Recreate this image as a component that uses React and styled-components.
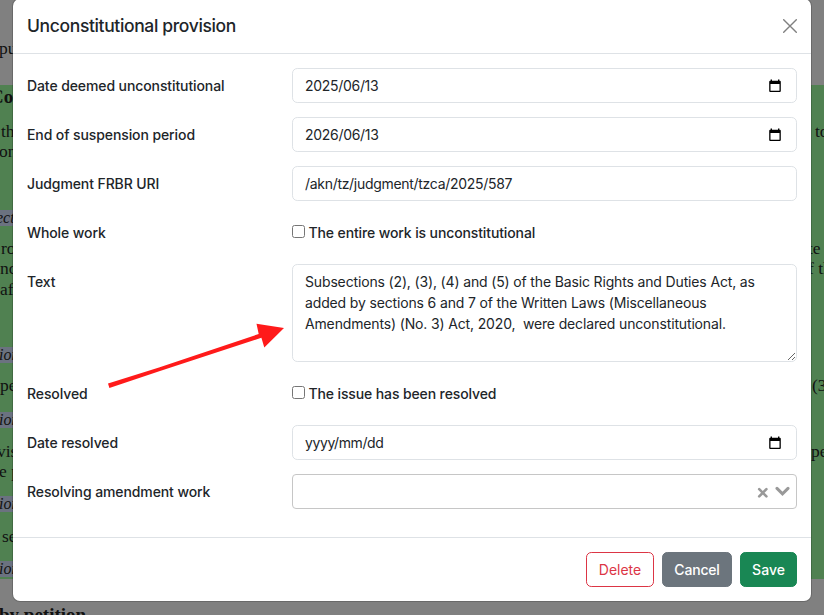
import React from "react";
import styled, { createGlobalStyle, css } from "styled-components";

const GlobalStyle = createGlobalStyle`
  * { box-sizing: border-box; }
  body {
    margin: 0;
    overflow: hidden;
    font: 400 14px/21px Inter, "Liberation Sans", sans-serif;
    color: #212529;
  }
`;

const Screen = styled.div`
  position: relative;
  width: 824px;
  height: 615px;
  overflow: hidden;
  background: linear-gradient(#808080 85px, #508151 85px 579px, #808080 579px);
`;

const Page = styled.div`
  display: flex;
  justify-content: space-between;
  font: 17.5px/19px "Palatino Linotype", "Liberation Serif", serif;
  color: #111;
`;

const Margin = styled.div`
  width: ${(p) => p.$width}px;
  white-space: nowrap;
`;

const PageLine = styled.div`
  height: 20px;
  margin-top: ${(p) => p.$gap || 0}px;
  text-indent: ${(p) => p.$indent || 0}px;
  ${(p) => p.$heading && css`
    font-weight: 700;
    font-size: 19px;
    line-height: 21px;
  `}
`;

const Reference = styled(PageLine)`
  height: 16px;
  line-height: 15px;
  font-size: 16px;
  font-style: italic;
  width: 14px;
  background: #6b7280;
`;

const Modal = styled.section`
  position: absolute;
  left: 13px;
  top: -1px;
  width: 798px;
  height: 602px;
  background: #fff;
  border-radius: 7px;
  box-shadow: 0 0 0 1px rgba(0, 0, 0, 0.175);
`;

const Header = styled.header`
  display: flex;
  align-items: center;
  justify-content: space-between;
  height: 55px;
  padding: 0 14px;
  border-bottom: 1px solid #dee2e6;
`;

const Title = styled.h5`
  margin: 0;
  font-size: 17.5px;
  font-weight: 500;
  line-height: 26px;
  letter-spacing: -0.36px;
`;

const CloseButton = styled.button`
  display: flex;
  padding: 0;
  border: 0;
  background: none;
  color: #808080;
`;

const Body = styled.div`
  display: flex;
  flex-direction: column;
  gap: 14px;
  height: 483px;
  padding: 14px;
`;

const Row = styled.div`
  display: grid;
  grid-template-columns: 265px 1fr;
  align-items: start;
`;

const Label = styled.label`
  padding: 7px 0;
  font-weight: 500;
  letter-spacing: -0.1px;
`;

const control = css`
  width: 100%;
  border: 1px solid #dee2e6;
  border-radius: 5.25px;
  background: #fff;
`;

const InputFrame = styled.div`
  ${control}
  display: flex;
  align-items: center;
  height: 35px;
  padding: 0 14px 0 12px;
`;

const Input = styled.input`
  flex: 1;
  min-width: 0;
  padding: 0;
  border: 0;
  outline: 0;
  background: transparent;
  font: inherit;
  letter-spacing: ${(p) => p.$tracking ?? -0.3}px;
  color: inherit;
`;

const TextArea = styled.textarea`
  ${control}
  display: block;
  height: 98px;
  padding: 6px 12px;
  font: inherit;
  letter-spacing: -0.15px;
  color: inherit;
  outline: 0;
`;

const CheckLabel = styled.label`
  display: flex;
  gap: 3.5px;
  padding: 7px 0;
  font-weight: 500;
  letter-spacing: -0.12px;
`;

const Check = styled.input`
  width: 13px;
  height: 13px;
  margin: 3px 0 0;
`;

const SelectFrame = styled.div`
  display: flex;
  align-items: center;
  justify-content: flex-end;
  gap: 7px;
  height: 35px;
  padding: 0 6px 0 5px;
  border: 1px solid #c6c6c6;
  border-radius: 4px;
`;

const Footer = styled.footer`
  display: flex;
  justify-content: flex-end;
  gap: 8px;
  padding: 14px;
  border-top: 1px solid #dee2e6;
`;

const buttonColors = {
  danger: css`color: #dc3545; background: #fff; border-color: #dc3545;`,
  secondary: css`color: #fff; background: #6c757d; border-color: #6c757d;`,
  success: css`color: #fff; background: #198754; border-color: #198754;`,
};

const Button = styled.button`
  width: ${(p) => p.$width}px;
  height: 35px;
  padding: 0;
  border: 1px solid;
  border-radius: 5.25px;
  font: inherit;
  font-weight: ${(p) => (p.$tone === "danger" ? 400 : 500)};
  letter-spacing: ${(p) => (p.$tone === "secondary" ? -0.2 : 0)}px;
  ${(p) => buttonColors[p.$tone]}
`;

const Arrow = styled.svg`
  position: absolute;
  left: 100px;
  top: 310px;
  pointer-events: none;
`;

const CalendarIcon = () => (
  <svg width="14" height="14" viewBox="0 0 14 14">
    <path
      fill="#000"
      fillRule="evenodd"
      d="M2.6.6h1.4v1.2h6V.6h1.4v1.2h.4q1 0 1 1v9.3q0 1-1 1H2.2q-1 0-1-1V2.8q0-1 1-1h.4zM2.5 5v6.8h9V5z"
    />
  </svg>
);

const DateField = ({ label, value, tracking }) => (
  <Row>
    <Label>{label}</Label>
    <InputFrame>
      <Input defaultValue={value} $tracking={tracking} />
      <CalendarIcon />
    </InputFrame>
  </Row>
);

const CheckField = ({ label, text }) => (
  <Row>
    <Label>{label}</Label>
    <CheckLabel>
      <Check type="checkbox" />
      {text}
    </CheckLabel>
  </Row>
);

export default function App() {
  return (
    <Screen>
      <GlobalStyle />
      <Page>
        <Margin $width={13}>
          <PageLine $gap={39} $indent={-1}>pu</PageLine>
          <PageLine $gap={27} $indent={-10} $heading>Co</PageLine>
          <PageLine $gap={16} $indent={1}>th</PageLine>
          <PageLine $indent={-1}>on</PageLine>
          <Reference $gap={48} $indent={-4}>ect</Reference>
          <PageLine $gap={13} $indent={1}>ro</PageLine>
          <PageLine $indent={0}>nc</PageLine>
          <PageLine $gap={1} $indent={0}>af</PageLine>
          <Reference $gap={47} $indent={-1}>ion</Reference>
          <PageLine $gap={13} $indent={0}>pe</PageLine>
          <Reference $gap={16} $indent={-1}>ion</Reference>
          <PageLine $gap={14} $indent={-3}>vis</PageLine>
          <PageLine $gap={0} $indent={-1}>e p</PageLine>
          <Reference $gap={14} $indent={-1}>ion</Reference>
          <PageLine $gap={15} $indent={2}>se</PageLine>
          <Reference $gap={14} $indent={-1}>ion</Reference>
          <PageLine $gap={27} $indent={-1} $heading>by petition</PageLine>
        </Margin>
        <Margin $width={13}>
          <PageLine $gap={122} $indent={4}>to</PageLine>
          <PageLine $gap={97} $indent={-3}>te</PageLine>
          <PageLine $indent={-3}>f th</PageLine>
          <PageLine $gap={97} $indent={1}>(3</PageLine>
          <PageLine $gap={46} $indent={0}>pe</PageLine>
        </Margin>
      </Page>
      <Modal role="dialog">
        <Header>
          <Title>Unconstitutional provision</Title>
          <CloseButton aria-label="Close">
            <svg width="14" height="14" viewBox="0 0 14 14" stroke="currentColor" strokeWidth="1.4" strokeLinecap="round">
              <path d="M.7.7l12.6 12.6M13.3.7L.7 13.3" />
            </svg>
          </CloseButton>
        </Header>
        <Body>
          <DateField label="Date deemed unconstitutional" value="2025/06/13" />
          <DateField label="End of suspension period" value="2026/06/13" />
          <Row>
            <Label>Judgment FRBR URI</Label>
            <InputFrame>
              <Input defaultValue="/akn/tz/judgment/tzca/2025/587" />
            </InputFrame>
          </Row>
          <CheckField label="Whole work" text="The entire work is unconstitutional" />
          <Row>
            <Label>Text</Label>
            <TextArea
              spellCheck={false}
              defaultValue="Subsections (2), (3), (4) and (5) of the Basic Rights and Duties Act, as added by sections 6 and 7 of the Written Laws (Miscellaneous Amendments) (No. 3) Act, 2020,  were declared unconstitutional."
            />
          </Row>
          <CheckField label="Resolved" text="The issue has been resolved" />
          <DateField label="Date resolved" value="yyyy/mm/dd" tracking={-0.4} />
          <Row>
            <Label>Resolving amendment work</Label>
            <SelectFrame>
              <svg width="12" height="12" viewBox="0 0 12 12" stroke="#999" strokeWidth="2.6" strokeLinecap="round">
                <path d="M3.2 3.2l7.2 7.2M10.4 3.2L3.2 10.4" />
              </svg>
              <svg width="15" height="12" viewBox="0 0 15 12" fill="none" stroke="#999" strokeWidth="3" strokeLinecap="round">
                <path d="M2 2.4l5.5 5.4L13 2.4" />
              </svg>
            </SelectFrame>
          </Row>
        </Body>
        <Footer>
          <Button $tone="danger" $width={68}>Delete</Button>
          <Button $tone="secondary" $width={70}>Cancel</Button>
          <Button $tone="success" $width={57}>Save</Button>
        </Footer>
      </Modal>
      <Arrow width="190" height="80" viewBox="0 0 190 80" fill="#ff1a1a">
        <path d="M8 73.4L59 57.4 158.7 24 156.5 13.8 184 18 164.3 37.6 161.4 27.8 60 61 9.4 78z" />
      </Arrow>
    </Screen>
  );
}
